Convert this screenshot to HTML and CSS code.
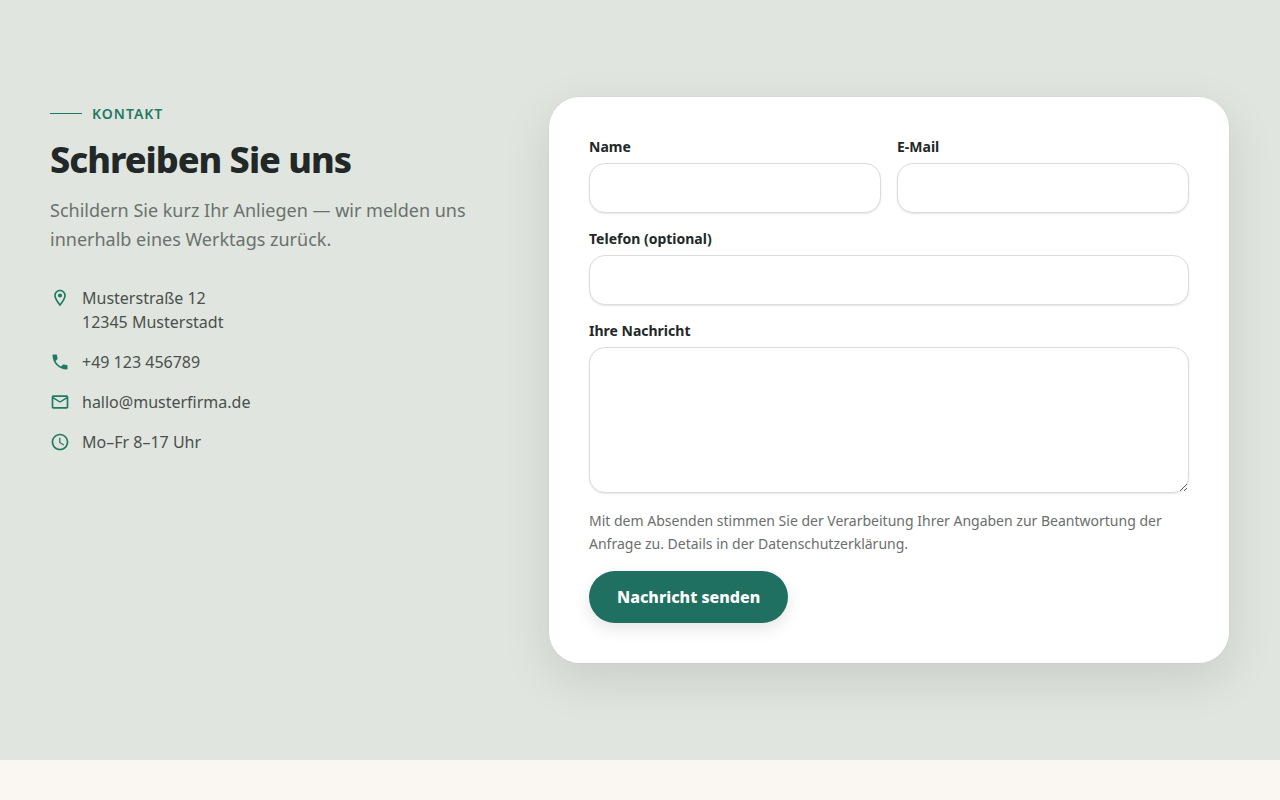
FILE: index.html
```html
<!DOCTYPE html>
<html lang="de">
<head>
    <meta charset="UTF-8">
    <meta name="viewport" content="width=device-width, initial-scale=1.0">
    <title>Kontakt</title>
    <link rel="stylesheet" href="styles.css">
</head>
<body>
    <section class="contact">
        <div class="container">
            <div class="contact-info">
                <p class="eyebrow">Kontakt</p>
                <h2>Schreiben Sie uns</h2>
                <p class="lead">Schildern Sie kurz Ihr Anliegen — wir melden uns innerhalb eines Werktags zurück.</p>

                <ul class="contact-list">
                    <li>
                        <svg class="icon" viewBox="0 0 24 24" aria-hidden="true"><path d="M12 2C8.13 2 5 5.13 5 9c0 5.25 7 13 7 13s7-7.75 7-13c0-3.87-3.13-7-7-7zM7 9c0-2.76 2.24-5 5-5s5 2.24 5 5c0 2.88-2.88 7.19-5 9.88C9.92 16.21 7 11.85 7 9z"/><circle cx="12" cy="9" r="2.5"/></svg>
                        <span>Musterstraße 12<br>12345 Musterstadt</span>
                    </li>
                    <li>
                        <svg class="icon" viewBox="0 0 24 24" aria-hidden="true"><path d="M6.62 10.79c1.44 2.83 3.76 5.14 6.59 6.59l2.2-2.2c.27-.27.67-.36 1.02-.24 1.12.37 2.33.57 3.57.57.55 0 1 .45 1 1V20c0 .55-.45 1-1 1-9.39 0-17-7.61-17-17 0-.55.45-1 1-1h3.5c.55 0 1 .45 1 1 0 1.25.2 2.45.57 3.57.11.35.03.74-.25 1.02l-2.2 2.2z"/></svg>
                        <span>+49 123 456789</span>
                    </li>
                    <li>
                        <svg class="icon" viewBox="0 0 24 24" aria-hidden="true"><path d="M20 4H4c-1.1 0-2 .9-2 2v12c0 1.1.9 2 2 2h16c1.1 0 2-.9 2-2V6c0-1.1-.9-2-2-2zm0 14H4V8l8 5 8-5v10zm-8-7L4 6h16l-8 5z"/></svg>
                        <span>hallo@musterfirma.de</span>
                    </li>
                    <li>
                        <svg class="icon" viewBox="0 0 24 24" aria-hidden="true"><path d="M11.99 2C6.47 2 2 6.48 2 12s4.47 10 9.99 10C17.52 22 22 17.52 22 12S17.52 2 11.99 2zM12 20c-4.42 0-8-3.58-8-8s3.58-8 8-8 8 3.58 8 8-3.58 8-8 8zm.5-13H11v6l5.25 3.15.75-1.23-4.5-2.67V7z"/></svg>
                        <span>Mo–Fr 8–17 Uhr</span>
                    </li>
                </ul>
            </div>

            <form class="contact-form" id="contactForm">
                <div class="form-row">
                    <div class="input-group">
                        <label for="name">Name</label>
                        <input type="text" id="name" name="name" autocomplete="name" required>
                    </div>
                    <div class="input-group">
                        <label for="email">E-Mail</label>
                        <input type="email" id="email" name="email" autocomplete="email" required>
                    </div>
                </div>

                <div class="input-group">
                    <label for="phone">Telefon (optional)</label>
                    <input type="tel" id="phone" name="phone" autocomplete="tel">
                </div>

                <div class="input-group">
                    <label for="message">Ihre Nachricht</label>
                    <textarea id="message" name="message" rows="5" required></textarea>
                </div>

                <p class="form-note">Mit dem Absenden stimmen Sie der Verarbeitung Ihrer Angaben zur Beantwortung der Anfrage zu. Details in der Datenschutzerklärung.</p>

                <button type="submit" class="btn">Nachricht senden</button>
            </form>
        </div>
    </section>
</body>
</html>
```

FILE: styles.css
```css
* {
    margin: 0;
    padding: 0;
    box-sizing: border-box;
}

body {
    font-family: 'Noto Sans', sans-serif;
    font-size: 16px;
    line-height: 24px;
    background: #faf6f1;
    color: #222827;
}

/* Contact section */
.contact {
    padding: 96px 50px;
    background: #e0e5df;
}

.container {
    display: grid;
    grid-template-columns: 7fr 11fr;
    gap: 64px;
    align-items: start;
    max-width: 1180px;
    margin: 0 auto;
}

.contact-info {
    padding-top: 6px;
}

.eyebrow {
    display: flex;
    align-items: center;
    gap: 10px;
    margin-bottom: 12px;
    font-size: 14px;
    line-height: 23px;
    font-weight: 600;
    letter-spacing: 1px;
    text-transform: uppercase;
    color: #1f7a62;
}

.eyebrow::before {
    content: "";
    width: 32px;
    height: 1px;
    background: #1f7a62;
}

h2 {
    margin-bottom: 13px;
    font-size: 36px;
    line-height: 46px;
    font-weight: 800;
    letter-spacing: -1px;
}

.lead {
    margin-bottom: 32px;
    font-size: 18px;
    line-height: 29px;
    color: #6a726d;
}

.contact-list {
    display: flex;
    flex-direction: column;
    gap: 16px;
    list-style: none;
    color: #4a504c;
}

.contact-list li {
    display: flex;
    gap: 12px;
}

.icon {
    flex: none;
    width: 20px;
    height: 20px;
    margin-top: 2px;
    fill: #1f7a62;
}

/* Form card */
.contact-form {
    display: flex;
    flex-direction: column;
    gap: 16px;
    padding: 40px;
    background: #fff;
    background-clip: padding-box;
    border: 1px solid rgba(0, 0, 0, 0.02);
    border-radius: 32px;
    box-shadow: 0 16px 48px rgba(0, 0, 0, 0.1);
}

.form-row {
    display: grid;
    grid-template-columns: 1fr 1fr;
    gap: 16px;
}

.input-group {
    display: flex;
    flex-direction: column;
    gap: 6px;
}

label {
    font-size: 14px;
    line-height: 20px;
    font-weight: 700;
}

input,
textarea {
    width: 100%;
    padding: 12px 16px;
    font: inherit;
    color: inherit;
    background: #fff;
    border: 1px solid #dcdcdc;
    border-radius: 16px;
    box-shadow: 0 1px 2px rgba(0, 0, 0, 0.1);
}

textarea {
    display: block;
    resize: vertical;
}

input:focus,
textarea:focus {
    border-color: #1f7060;
    outline: none;
}

.form-note {
    font-size: 14px;
    line-height: 23px;
    color: #6a6e6c;
}

.btn {
    align-self: flex-start;
    padding: 14px 28px;
    font: inherit;
    font-weight: 800;
    color: #fff;
    background: #1f7060;
    border: none;
    border-radius: 26px;
    box-shadow: 0 6px 16px rgba(0, 0, 0, 0.1);
    cursor: pointer;
}

.btn:hover {
    background: #185a4d;
}

@media (max-width: 860px) {
    .contact {
        padding: 64px 24px;
    }

    .container {
        grid-template-columns: 1fr;
        gap: 40px;
    }
}

@media (max-width: 520px) {
    .contact-form {
        padding: 24px;
    }

    .form-row {
        grid-template-columns: 1fr;
    }
}
```
